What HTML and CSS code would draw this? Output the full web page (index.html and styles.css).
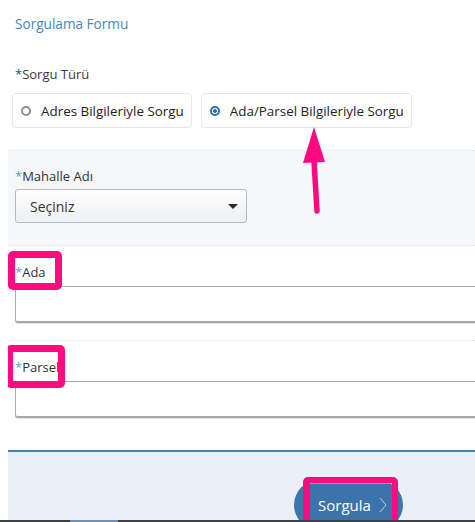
FILE: index.html
```html
<!DOCTYPE html>
<html lang="tr">
<head>
<meta charset="utf-8">
<title>Sorgulama Formu</title>
<link rel="stylesheet" href="styles.css">
</head>
<body>
<div class="page">
  <div class="title">Sorgulama Formu</div>
  <div class="type-label"><span class="req-dark">*</span>Sorgu Türü</div>
  <div class="radio-row">
    <label class="radio-box"><span class="radio"></span><span>Adres Bilgileriyle Sorgu</span></label>
    <label class="radio-box"><span class="radio checked"></span><span>Ada/Parsel Bilgileriyle Sorgu</span></label>
  </div>

  <div class="grey-section">
    <svg class="side-mark" width="6" height="8" viewBox="0 0 6 8"><path d="M1 1 L4 4 L1 7" fill="none" stroke="#c8ccd2" stroke-width="1.2"/></svg>
    <div class="label"><span class="req">*</span>Mahalle Adı</div>
    <div class="select"><span>Seçiniz</span><span class="caret"></span></div>
  </div>

  <div class="field-section dotted">
    <div class="label"><span class="req">*</span>Ada</div>
    <div class="input"></div>
  </div>

  <div class="field-section last">
    <div class="label"><span class="req">*</span>Parsel</div>
    <div class="input"></div>
  </div>

  <div class="footer">
    <div class="btn-oval">
      <div class="btn">Sorgula<svg class="chev" width="8" height="16" viewBox="0 0 8 16"><path d="M1 1 L7 8 L1 15" fill="none" stroke="#b9cfe6" stroke-width="1"/></svg></div>
    </div>
  </div>

  <div class="mark mark-ada"></div>
  <div class="mark mark-parsel"></div>
  <div class="mark mark-btn"></div>
  <svg class="arrow" width="30" height="90" viewBox="0 0 30 90">
    <path d="M12 34 L15 84" stroke="#ff0a80" stroke-width="5.5" stroke-linecap="round" fill="none"/>
    <polygon points="12,0 1,36 23,35" fill="#ff0a80"/>
  </svg>
</div>
<div class="scrollbar"><div class="thumb"></div></div>
</body>
</html>
```

FILE: styles.css
```css
html, body {
  margin: 0;
  padding: 0;
  background: #fff;
  overflow: hidden;
}

.page {
  position: relative;
  margin-left: 8px;
  font-family: "Open Sans", "Noto Sans", sans-serif;
  font-size: 13px;
  color: #333;
  overflow: hidden;
  height: 540px;
}

.title {
  padding: 15px 7px 0;
  line-height: 18px;
  font-size: 13.6px;
  color: #3f87c6;
}

.type-label {
  margin-top: 32px;
  padding-left: 7px;
  line-height: 18px;
  color: #3a3a3a;
}

.req-dark {
  color: #34506e;
}

.req {
  color: #5b9bd5;
}

.radio-row {
  margin-top: 10px;
  padding-left: 4px;
  display: flex;
  gap: 9px;
}

.radio-box {
  display: flex;
  align-items: center;
  gap: 10px;
  height: 35px;
  box-sizing: border-box;
  padding: 0 7px 0 8px;
  border: 1px solid #e6e7e9;
  border-radius: 4px;
  font-size: 13.4px;
  color: #222;
  background: #fff;
}

.radio {
  width: 10px;
  height: 10px;
  box-sizing: border-box;
  border: 2px solid #8c8f96;
  border-radius: 50%;
  background: #fff;
}

.radio.checked {
  border-color: #2c6fb7;
  background: radial-gradient(circle, #2c6fb7 0 1.6px, #fff 2.2px);
}

.grey-section {
  position: relative;
  margin-top: 22px;
  height: 96px;
  box-sizing: border-box;
  padding: 16px 7px 0;
  background: #f6f7f9;
  border-top: 1px dotted #e3e5e8;
  border-bottom: 1px dotted #e3e5e8;
}

.side-mark {
  position: absolute;
  left: -7px;
  top: 19px;
}

.label {
  line-height: 18px;
  color: #333;
}

.select {
  margin-top: 4px;
  width: 232px;
  height: 34px;
  box-sizing: border-box;
  border: 1px solid #b8b9bb;
  border-radius: 3px;
  background: linear-gradient(#ffffff, #eeeff1);
  display: flex;
  align-items: center;
  justify-content: space-between;
  padding: 0 8px 0 14px;
  font-size: 14px;
  color: #333;
}

.caret {
  width: 0;
  height: 0;
  border-left: 5px solid transparent;
  border-right: 5px solid transparent;
  border-top: 5px solid #2b2a33;
}

.field-section {
  padding: 17px 7px 0;
  height: 95px;
  box-sizing: border-box;
}

.field-section.dotted {
  border-bottom: 1px dotted #e3e5e8;
}

.field-section.last {
  height: 109px;
}

.input {
  margin-top: 5px;
  width: 520px;
  height: 37px;
  box-sizing: border-box;
  border: 1px solid #aaaaaa;
  border-bottom: 2px solid #a9a9a9;
  border-radius: 3px;
  background: #fff;
  box-shadow: 0 1px 0 #e6e6e6;
}

.footer {
  border-top: 2px solid #3f83c3;
  background: #ebf0f8;
  height: 90px;
  padding: 28px 0 0 286px;
  box-sizing: border-box;
}

.btn-oval {
  width: 109px;
  height: 50px;
  border-radius: 25px;
  background: #3e75ad;
  padding: 3px 0 0 16px;
  box-sizing: border-box;
}

.btn {
  width: 81px;
  height: 40px;
  box-sizing: border-box;
  background: #3b74ab;
  border-top: 1px solid #78a6d6;
  color: #fff;
  font-size: 15px;
  padding: 11px 0 0 8px;
  line-height: 20px;
  display: flex;
  align-items: flex-start;
}

.chev {
  margin: 2px 0 0 8px;
}

.mark {
  position: absolute;
  border: 7px solid #ff0a80;
  border-radius: 5px;
  box-sizing: border-box;
}

.mark-ada {
  left: 0;
  top: 251px;
  width: 54px;
  height: 39px;
}

.mark-parsel {
  left: -2px;
  top: 345px;
  width: 59px;
  height: 43px;
}

.mark-btn {
  left: 295px;
  top: 477px;
  width: 95px;
  height: 52px;
  border-width: 6px 6px 6px 7px;
}

.arrow {
  position: absolute;
  left: 294px;
  top: 127px;
}

.scrollbar {
  position: fixed;
  left: 0;
  right: 0;
  bottom: 0;
  height: 2px;
  background: #3d3f42;
}

.thumb {
  margin-left: 70px;
  width: 48px;
  height: 2px;
  background: #6f8fb3;
}
```
